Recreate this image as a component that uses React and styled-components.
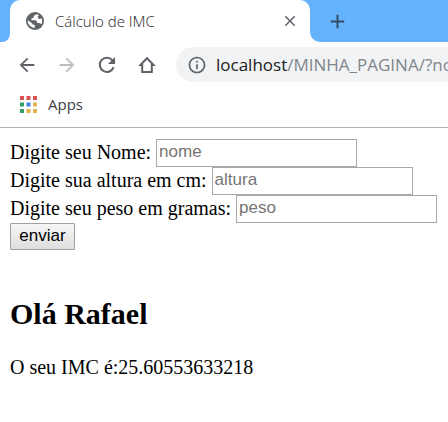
import React from 'react';
import styled, { createGlobalStyle } from 'styled-components';
import { MdAdd, MdArrowBack, MdArrowForward, MdClose, MdInfoOutline } from 'react-icons/md';

const GlobalStyle = createGlobalStyle`
  body {
    margin: 0;
    background: #fff;
    overflow-x: hidden;
  }
`;

const Browser = styled.header`
  font-family: 'Open Sans', 'Noto Sans', sans-serif;
  color: #3c4043;
  border-bottom: 1px solid #b0b0b0;
  svg {
    flex-shrink: 0;
  }
`;

const TabStrip = styled.div`
  display: flex;
  height: 42px;
`;

const StripEdge = styled.div`
  width: 10px;
  background: #64b3fc;
  border-bottom-right-radius: 8px;
`;

const StripRest = styled.div`
  flex: 1;
  display: flex;
  align-items: center;
  padding-left: 16px;
  background: #64b3fc;
  border-bottom-left-radius: 10px;
`;

const TabSlot = styled.div`
  width: 300px;
  background: #64b3fc;
`;

const Tab = styled.div`
  display: flex;
  align-items: center;
  height: 100%;
  box-sizing: border-box;
  padding: 0 11px 0 14px;
  background: #fff;
  border-radius: 10px 10px 0 0;
  color: #5f6368;
`;

const TabTitle = styled.span`
  flex: 1;
  margin-left: 9px;
  padding-bottom: 1px;
  font-size: 15px;
  font-weight: 300;
  color: #202124;
`;

const IconButton = styled.button`
  display: flex;
  padding: 0;
  border: 0;
  background: none;
  color: ${(props) => props.$color || '#5f6368'};
`;

const Toolbar = styled.nav`
  display: flex;
  align-items: center;
  gap: 18px;
  padding: 5px 0 5px 16px;
`;

const AddressBar = styled.div`
  flex: 1;
  min-width: 0;
  display: flex;
  align-items: center;
  gap: 9px;
  height: 35px;
  padding-left: 11px;
  box-sizing: border-box;
  background: #f1f3f4;
  border-radius: 18px 0 0 18px;
  color: #5f6368;
`;

const Url = styled.span`
  flex: 1;
  min-width: 0;
  white-space: nowrap;
  font-size: 17px;
  line-height: 24px;
  color: #80868b;
`;

const Host = styled.span`
  color: #202124;
`;

const Bookmarks = styled.div`
  display: flex;
  align-items: center;
  height: 34px;
  padding: 0 20px 6px;
`;

const AppsLink = styled.a`
  display: flex;
  align-items: center;
  gap: 11px;
  font-size: 15px;
  color: #3c4043;
  text-decoration: none;
`;

const Page = styled.main`
  padding: 11px 10px;
  font-family: 'Liberation Serif', 'Times New Roman', serif;
  font-size: 20px;
  color: #000;
`;

const Row = styled.div`
  display: flex;
  align-items: center;
  gap: 5px;
  height: 28px;
  white-space: nowrap;
`;

const Label = styled.label`
  padding-bottom: 2px;
`;

const Input = styled.input`
  width: 201px;
  height: 28px;
  box-sizing: border-box;
  padding: 0 2px 2px;
  border: 1px solid #a9a9a9;
  border-radius: 0;
  background: #fff;
  font-family: 'Liberation Sans', Arial, sans-serif;
  font-size: 17px;
  &::placeholder {
    color: #757575;
  }
`;

const Submit = styled.button`
  display: block;
  width: 65px;
  height: 27px;
  padding: 0 0 2px;
  border: 1px solid #a0a0a0;
  border-radius: 1px;
  background: linear-gradient(#f6f6f6, #dedede);
  color: #000;
  font-family: 'Liberation Sans', Arial, sans-serif;
  font-size: 17px;
`;

const Greeting = styled.h2`
  margin: 47px 0 24px;
  font-size: 30px;
  line-height: 34px;
`;

const Result = styled.p`
  margin: 0;
  line-height: 24px;
`;

const fields = [
  { id: 'nome', label: 'Digite seu Nome:' },
  { id: 'altura', label: 'Digite sua altura em cm:' },
  { id: 'peso', label: 'Digite seu peso em gramas:' },
];

const dots = [
  ['#d9534f', '#d9534f', '#d9534f'],
  ['#35a065', '#3f86e0', '#e3b04b'],
  ['#35a065', '#e3b04b', '#e3b04b'],
];

const GlobeIcon = () => (
  <svg width="22" height="22" viewBox="0 0 22 22" fill="none">
    <circle cx="11" cy="11" r="9" fill="currentColor" />
    <path
      d="M12.5 4.2 9.8 5.8 9.6 7.8 7.4 8.4 7.5 10.2H11.5L13 11.5V13H15.3L17.6 14.3A7.3 7.3 0 0 0 17.7 8.2L15.8 9 14.3 8.6 13.6 6.9 15 5.1Z"
      fill="#fff"
    />
    <path d="M3.7 10.2 8 13.2 8.8 14.8H10.8V17.9A7.2 7.2 0 0 1 3.7 10.2Z" fill="#fff" />
  </svg>
);

const ReloadIcon = () => (
  <svg width="22" height="22" viewBox="0 0 22 22" fill="none">
    <path d="M17.6 13.2A7.1 7.1 0 1 1 16.4 6.3" stroke="currentColor" strokeWidth="2" />
    <path d="M19 3v7h-7z" fill="currentColor" />
  </svg>
);

const HomeIcon = () => (
  <svg width="22" height="22" viewBox="0 0 22 22" fill="none">
    <path d="M11 4.2 4.4 11H6.2V18H15.8V11H17.6Z" stroke="currentColor" strokeWidth="2" />
  </svg>
);

const AppsIcon = () => (
  <svg width="17" height="17" viewBox="0 0 17 17">
    {dots.map((row, y) =>
      row.map((color, x) => (
        <rect key={`${x}-${y}`} x={x * 6.5} y={y * 6.5} width="4" height="4" fill={color} />
      ))
    )}
  </svg>
);

const App = () => {
  return (
    <>
      <GlobalStyle />
      <Browser>
        <TabStrip>
          <StripEdge />
          <TabSlot>
            <Tab>
              <GlobeIcon />
              <TabTitle>Cálculo de IMC</TabTitle>
              <IconButton aria-label="Fechar guia">
                <MdClose size={18} />
              </IconButton>
            </Tab>
          </TabSlot>
          <StripRest>
            <IconButton $color="#2f4a63" aria-label="Nova guia">
              <MdAdd size={23} />
            </IconButton>
          </StripRest>
        </TabStrip>
        <Toolbar>
          <IconButton aria-label="Voltar">
            <MdArrowBack size={22} />
          </IconButton>
          <IconButton $color="#babcbe" aria-label="Avançar">
            <MdArrowForward size={22} />
          </IconButton>
          <IconButton aria-label="Recarregar">
            <ReloadIcon />
          </IconButton>
          <IconButton aria-label="Início">
            <HomeIcon />
          </IconButton>
          <AddressBar>
            <MdInfoOutline size={20} />
            <Url>
              <Host>localhost</Host>/MINHA_PAGINA/?no
            </Url>
          </AddressBar>
        </Toolbar>
        <Bookmarks>
          <AppsLink href="#apps">
            <AppsIcon />
            Apps
          </AppsLink>
        </Bookmarks>
      </Browser>
      <Page>
        <form onSubmit={(e) => e.preventDefault()}>
          {fields.map(({ id, label }) => (
            <Row key={id}>
              <Label htmlFor={id}>{label}</Label>
              <Input id={id} name={id} placeholder={id} />
            </Row>
          ))}
          <Submit type="submit">enviar</Submit>
        </form>
        <Greeting>Olá Rafael</Greeting>
        <Result>O seu IMC é:25.60553633218</Result>
      </Page>
    </>
  );
};

export default App;
